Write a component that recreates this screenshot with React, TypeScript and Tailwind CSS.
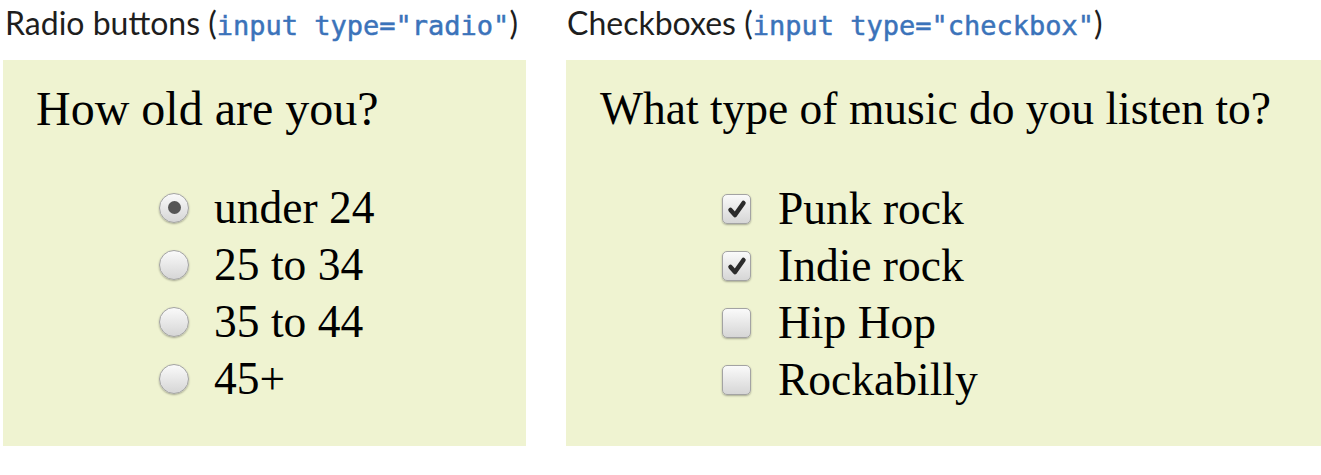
const Radio = ({ checked }: { checked?: boolean }) => (
  <span className="flex h-[30px] w-[30px] shrink-0 items-center justify-center rounded-full border border-[#a3a3a3] bg-gradient-to-b from-[#fafafa] to-[#d6d6d6] shadow-[0_1px_2px_rgba(0,0,0,0.3)]">
    {checked && <span className="h-[13px] w-[13px] rounded-full bg-[#555]" />}
  </span>
);

const Checkbox = ({ checked }: { checked?: boolean }) => (
  <span className="flex h-[30px] w-[29px] shrink-0 items-center justify-center rounded-[5px] border border-[#a3a3a3] bg-gradient-to-b from-[#fafafa] to-[#d6d6d6] shadow-[0_1px_2px_rgba(0,0,0,0.3)]">
    {checked && (
      <svg width="20" height="20" viewBox="0 0 20 20">
        <path d="M3.5 11 L8 16 L16.5 4" fill="none" stroke="#2b2b2b" strokeWidth="4.5" strokeLinecap="round" strokeLinejoin="round" />
      </svg>
    )}
  </span>
);

const Code = ({ children }: { children: string }) => (
  <code className="font-['DejaVu_Sans_Mono',monospace] text-[27px] text-[#3b73ba] [-webkit-text-stroke:0.5px_#3b73ba]">
    {children}
  </code>
);

const radios = [
  { label: 'under 24', checked: true },
  { label: '25 to 34' },
  { label: '35 to 44' },
  { label: '45+' },
];

const boxes = [
  { label: 'Punk rock', checked: true },
  { label: 'Indie rock', checked: true },
  { label: 'Hip Hop' },
  { label: 'Rockabilly' },
];

export default function App() {
  return (
    <div className="flex h-[475px] w-[1321px] gap-[40px] bg-white pl-[3px]">
      {/* Radio buttons */}
      <div className="flex w-[523px] flex-col">
        <div className="h-[60px] pt-[3px] pl-[2px] font-['Lato',sans-serif] text-[32px] leading-[40px] whitespace-nowrap text-[#1e1e1e]">
          Radio buttons (<Code>input type="radio"</Code>)
        </div>
        <div className="h-[386px] bg-[#eff3d1] pt-[21px] pl-[33px] font-['Liberation_Serif',serif] text-black">
          <p className="text-[48px] leading-[55px]">How old are you?</p>
          <ul className="mt-[43px] pl-[123px] text-[45.5px]">
            {radios.map((r) => (
              <li key={r.label} className="flex h-[57px] items-center gap-[25px]">
                <Radio checked={r.checked} />
                <span className="leading-[57px]">{r.label}</span>
              </li>
            ))}
          </ul>
        </div>
      </div>

      {/* Checkboxes */}
      <div className="flex w-[755px] flex-col">
        <div className="h-[60px] pt-[3px] pl-[1px] font-['Lato',sans-serif] text-[32px] leading-[40px] whitespace-nowrap text-[#1e1e1e]">
          Checkboxes (<Code>input type="checkbox"</Code>)
        </div>
        <div className="h-[386px] bg-[#eff3d1] pt-[22px] pl-[34px] font-['Liberation_Serif',serif] text-black">
          <p className="text-[45.5px] leading-[54px]">What type of music do you listen to?</p>
          <ul className="mt-[44px] pl-[122px] text-[45.5px]">
            {boxes.map((b) => (
              <li key={b.label} className="flex h-[57px] items-center gap-[27px]">
                <Checkbox checked={b.checked} />
                <span className="leading-[57px]">{b.label}</span>
              </li>
            ))}
          </ul>
        </div>
      </div>
    </div>
  );
}
